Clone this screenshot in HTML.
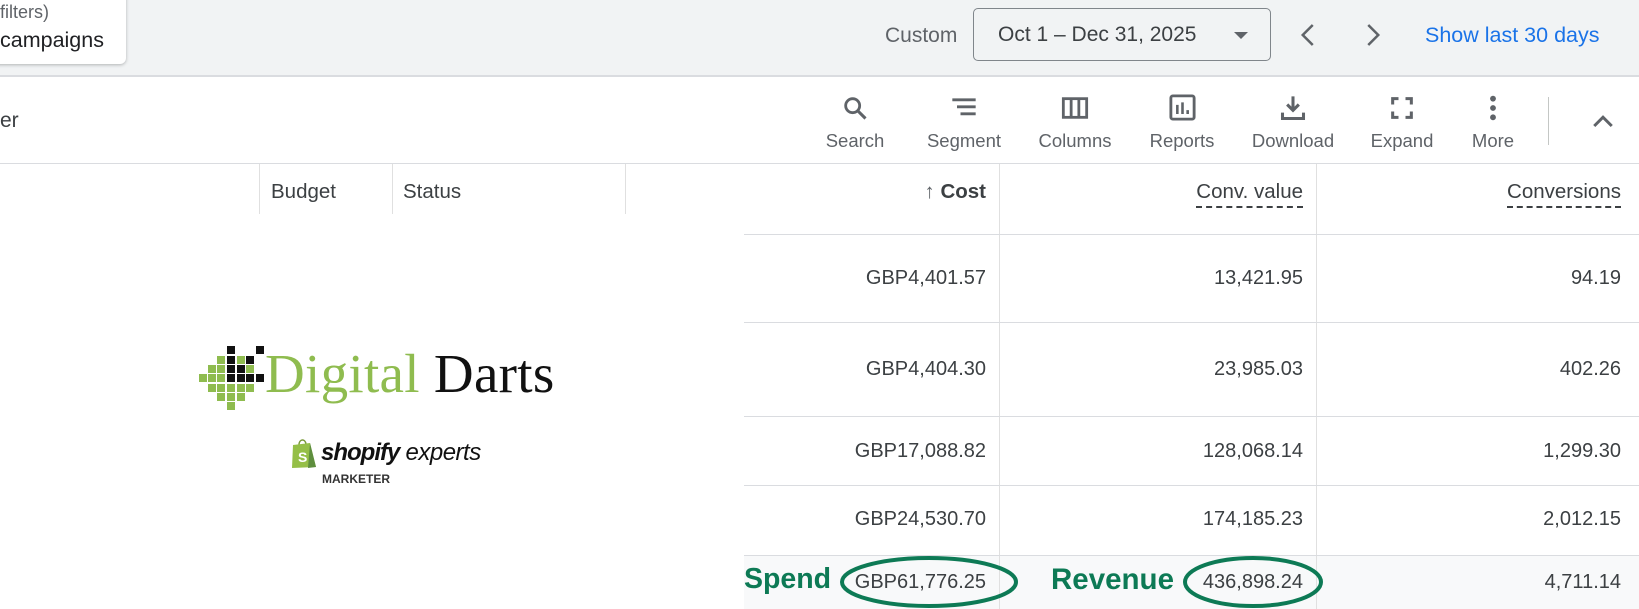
<!DOCTYPE html>
<html><head><meta charset="utf-8"><style>
*{margin:0;padding:0;box-sizing:border-box}
body{width:1639px;height:609px;overflow:hidden;background:#fff;font-family:"Liberation Sans",Arial,sans-serif;color:#3c4043;position:relative}
.a{position:absolute;white-space:nowrap}
.top{position:absolute;left:0;top:0;width:1639px;height:77px;background:#f1f3f4;border-bottom:2px solid #dadce0}
.card{position:absolute;left:-10px;top:-10px;width:136px;height:74px;background:#fff;border-radius:6px;box-shadow:0 1px 3px rgba(60,64,67,.35)}
.lbl{font-size:18.5px;color:#5f6368;text-align:center;width:110px;top:130px}
.ic{position:absolute;top:94px}
.num{font-size:20px;color:#3c4043;text-align:right}
.hl{position:absolute;height:1px;background:#dadce0}
.vl{position:absolute;width:1px;background:#e0e0e0}
.px{position:absolute;width:8px;height:8px}
.g{background:#8fbc4f}.k{background:#111}
</style></head><body>
<div class="top"></div>
<div class="card"></div>
<div class="a" style="left:0;top:2px;font-size:18px;color:#5f6368">filters)</div>
<div class="a" style="left:0;top:28px;font-size:21.5px;color:#202124">campaigns</div>
<div class="a" style="left:885px;top:24px;font-size:21px;color:#5f6368">Custom</div>
<div class="a" style="left:973px;top:8px;width:298px;height:53px;border:1px solid #80868b;border-radius:5px"></div>
<div class="a" style="left:998px;top:23px;font-size:21px;color:#3c4043">Oct 1 – Dec 31, 2025</div>
<div class="a" style="left:1234px;top:32px;width:0;height:0;border-left:7px solid transparent;border-right:7px solid transparent;border-top:7px solid #5f6368"></div>
<svg class="a" style="left:1294px;top:20px" width="30" height="30" viewBox="0 0 24 24"><path d="M15 4 L7 12 L15 20" fill="none" stroke="#5f6368" stroke-width="2"/></svg>
<svg class="a" style="left:1357px;top:20px" width="30" height="30" viewBox="0 0 24 24"><path d="M9 4 L17 12 L9 20" fill="none" stroke="#5f6368" stroke-width="2"/></svg>
<div class="a" style="left:1425px;top:23px;font-size:21.5px;color:#1a73e8">Show last 30 days</div>

<div class="a" style="left:0;top:109px;font-size:21px;color:#3c4043">er</div>
<svg class="ic" style="left:841px" width="28" height="28" viewBox="0 0 24 24"><circle cx="10" cy="10" r="6" fill="none" stroke="#5f6368" stroke-width="2.4"/><path d="M14.5 14.5 L21 21" stroke="#5f6368" stroke-width="2.6"/></svg>
<svg class="ic" style="left:950px" width="28" height="28" viewBox="0 0 24 24"><path d="M2 5H22M6 11H22M9 17H22" stroke="#5f6368" stroke-width="2.4"/></svg>
<svg class="ic" style="left:1061px" width="28" height="28" viewBox="0 0 24 24"><rect x="2" y="4" width="20" height="16" fill="none" stroke="#5f6368" stroke-width="2.4"/><path d="M8.7 4V20M15.3 4V20" stroke="#5f6368" stroke-width="2.4"/></svg>
<svg class="ic" style="left:1167px;top:92px" width="31" height="31" viewBox="0 0 24 24"><rect x="3" y="3" width="18" height="18" rx="1.5" fill="none" stroke="#5f6368" stroke-width="2.2"/><path d="M8 10V17M12 8V17M16 14V17" stroke="#5f6368" stroke-width="2"/></svg>
<svg class="ic" style="left:1279px" width="28" height="28" viewBox="0 0 24 24"><path d="M12 2V14M7 9L12 14L17 9" fill="none" stroke="#5f6368" stroke-width="2.6"/><path d="M3 16V21H21V16" fill="none" stroke="#5f6368" stroke-width="2.6"/></svg>
<svg class="ic" style="left:1388px" width="28" height="28" viewBox="0 0 24 24"><path d="M4 9V4H9M15 4H20V9M20 15V20H15M9 20H4V15" fill="none" stroke="#5f6368" stroke-width="2.6"/></svg>
<svg class="ic" style="left:1479px" width="28" height="28" viewBox="0 0 24 24"><circle cx="12" cy="4" r="2.5" fill="#5f6368"/><circle cx="12" cy="12" r="2.5" fill="#5f6368"/><circle cx="12" cy="20" r="2.5" fill="#5f6368"/></svg>
<div class="a lbl" style="left:800px">Search</div>
<div class="a lbl" style="left:909px">Segment</div>
<div class="a lbl" style="left:1020px">Columns</div>
<div class="a lbl" style="left:1127px">Reports</div>
<div class="a lbl" style="left:1238px">Download</div>
<div class="a lbl" style="left:1347px">Expand</div>
<div class="a lbl" style="left:1438px">More</div>
<div class="vl" style="left:1548px;top:97px;height:48px;background:#c4c7c5"></div>
<svg class="a" style="left:1588px;top:106px" width="30" height="30" viewBox="0 0 24 24"><path d="M5 16L12 9L19 16" fill="none" stroke="#5f6368" stroke-width="2.4"/></svg>

<div class="hl" style="left:0;top:163px;width:1639px"></div>
<div class="vl" style="left:259px;top:164px;height:50px"></div>
<div class="vl" style="left:392px;top:164px;height:50px"></div>
<div class="vl" style="left:625px;top:164px;height:50px"></div>
<div class="a" style="left:271px;top:180px;font-size:20.5px">Budget</div>
<div class="a" style="left:403px;top:180px;font-size:20.5px">Status</div>

<div class="a" style="left:744px;top:555px;width:895px;height:54px;background:#f8f9fa"></div>
<div class="vl" style="left:999px;top:164px;height:445px"></div>
<div class="vl" style="left:1316px;top:164px;height:445px"></div>
<div class="hl" style="left:744px;top:234px;width:895px"></div>
<div class="hl" style="left:744px;top:322px;width:895px"></div>
<div class="hl" style="left:744px;top:416px;width:895px"></div>
<div class="hl" style="left:744px;top:485px;width:895px"></div>
<div class="hl" style="left:744px;top:555px;width:895px"></div>

<div class="a" style="right:653px;top:180px;font-size:20.5px;font-weight:bold;color:#3c4043"><span style="font-weight:normal;color:#5f6368">↑</span> Cost</div>
<div class="a" style="right:336px;top:180px;font-size:20.5px;border-bottom:2px dashed #3c4043;padding-bottom:2px">Conv. value</div>
<div class="a" style="right:18px;top:180px;font-size:20.5px;border-bottom:2px dashed #3c4043;padding-bottom:2px">Conversions</div>

<div class="a num" style="right:653px;top:267px">GBP4,401.57</div>
<div class="a num" style="right:336px;top:267px">13,421.95</div>
<div class="a num" style="right:18px;top:267px">94.19</div>
<div class="a num" style="right:653px;top:358px">GBP4,404.30</div>
<div class="a num" style="right:336px;top:358px">23,985.03</div>
<div class="a num" style="right:18px;top:358px">402.26</div>
<div class="a num" style="right:653px;top:440px">GBP17,088.82</div>
<div class="a num" style="right:336px;top:440px">128,068.14</div>
<div class="a num" style="right:18px;top:440px">1,299.30</div>
<div class="a num" style="right:653px;top:508px">GBP24,530.70</div>
<div class="a num" style="right:336px;top:508px">174,185.23</div>
<div class="a num" style="right:18px;top:508px">2,012.15</div>
<div class="a num" style="right:653px;top:571px">GBP61,776.25</div>
<div class="a num" style="right:336px;top:571px">436,898.24</div>
<div class="a num" style="right:18px;top:571px">4,711.14</div>

<div class="a" style="left:744px;top:563px;font-size:28.5px;font-weight:bold;color:#0d7a55">Spend</div>
<div class="a" style="left:1051px;top:563px;font-size:29.5px;font-weight:bold;color:#0d7a55">Revenue</div>
<svg class="a" style="left:838px;top:553px" width="182" height="56"><ellipse cx="91" cy="29" rx="87" ry="24" fill="none" stroke="#0d7a55" stroke-width="4"/></svg>
<svg class="a" style="left:1181px;top:553px" width="144" height="56"><ellipse cx="72" cy="29" rx="68" ry="24" fill="none" stroke="#0d7a55" stroke-width="4"/></svg>

<!-- logo pixels -->
<div class="px k" style="left:227px;top:346px"></div><div class="px k" style="left:256px;top:346px"></div>
<div class="px g" style="left:217px;top:356px"></div><div class="px k" style="left:227px;top:356px"></div><div class="px g" style="left:237px;top:356px"></div><div class="px k" style="left:246px;top:356px"></div>
<div class="px g" style="left:208px;top:365px"></div><div class="px g" style="left:217px;top:365px"></div><div class="px k" style="left:227px;top:365px"></div><div class="px k" style="left:237px;top:365px"></div><div class="px g" style="left:246px;top:365px"></div>
<div class="px g" style="left:199px;top:374px"></div><div class="px g" style="left:208px;top:374px"></div><div class="px g" style="left:217px;top:374px"></div><div class="px k" style="left:227px;top:374px"></div><div class="px k" style="left:237px;top:374px"></div><div class="px k" style="left:246px;top:374px"></div><div class="px k" style="left:256px;top:374px"></div>
<div class="px g" style="left:208px;top:384px"></div><div class="px g" style="left:217px;top:384px"></div><div class="px g" style="left:227px;top:384px"></div><div class="px g" style="left:237px;top:384px"></div><div class="px g" style="left:246px;top:384px"></div>
<div class="px g" style="left:217px;top:393px"></div><div class="px g" style="left:227px;top:393px"></div><div class="px g" style="left:237px;top:393px"></div>
<div class="px g" style="left:227px;top:402px"></div>
<div class="a" style="left:265px;top:344px;font-family:'Liberation Serif',serif;font-size:55px;line-height:60px;letter-spacing:0.3px"><span style="color:#8fbc4f">Digital</span> <span style="color:#111">Darts</span></div>
<svg class="a" style="left:290px;top:437px" width="28" height="32" viewBox="0 0 28 32"><path d="M9 8 C9 2 15 1 16 7" fill="none" stroke="#7a9a3a" stroke-width="1.5"/><path d="M3 8 L20 6 L26 30 L2 31 Z" fill="#95bf47"/><path d="M20 6 L26 30 L18 31 Z" fill="#5e8e3e"/><text x="8" y="25" font-family="Liberation Sans" font-weight="bold" font-size="14" fill="#fff">S</text></svg>
<div class="a" style="left:321px;top:439px;font-size:24px;font-weight:bold;font-style:italic;color:#111;letter-spacing:-1px">shopify<span style="font-weight:normal;letter-spacing:-0.5px"> experts</span></div>
<div class="a" style="left:322px;top:472px;font-size:12px;font-weight:bold;color:#333">MARKETER</div>
</body></html>
